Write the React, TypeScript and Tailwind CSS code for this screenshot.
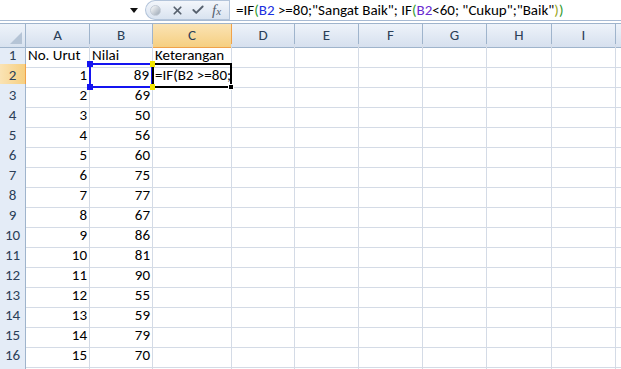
import { X, Check } from 'lucide-react';

const COLS = ['A', 'B', 'C', 'D', 'E', 'F', 'G', 'H', 'I', ''];
const NILAI = [89, 69, 50, 56, 60, 75, 77, 67, 86, 81, 90, 55, 59, 79, 70];
const GRID = 'grid grid-cols-[26px_64px_63px_79px_63px_64px_64px_64px_65px_64px_64px]';

const FONT = { fontFamily: '"Carlito", "Liberation Sans", Arial, sans-serif' };

function FormulaBar() {
  return (
    <div className="flex h-[21px] bg-white border-b border-[#a7bad3]">
      <div className="w-[145px] flex items-center justify-end pr-[7px]">
        <svg width="8" height="5" viewBox="0 0 8 5"><path d="M0 0h8L4 5z" fill="#111" /></svg>
      </div>
      <div className="w-[84px] h-[20px] rounded-l-full border border-r-0 border-[#b3c4da] bg-gradient-to-b from-[#f3f6fb] to-[#d9e3f0] flex items-center">
        <div className="ml-[4px] w-[11px] h-[11px] rounded-full bg-gradient-to-br from-[#ffffff] to-[#9aa6b4] border border-[#c3cbd6]" />
        <X className="ml-[10px] w-[13px] h-[13px] text-[#56606d]" strokeWidth={3.2} />
        <Check className="ml-[7px] w-[14px] h-[14px] text-[#56606d]" strokeWidth={3.2} />
        <span className="ml-[7px] text-[15px] italic text-[#55606e] leading-none" style={{ fontFamily: '"Liberation Serif", serif' }}>
          f<span className="text-[11px]">x</span>
        </span>
      </div>
      <div className="flex-1 flex items-center pl-[6px] text-[15px] text-black whitespace-nowrap overflow-hidden border-l border-[#b3c4da]" style={FONT}>
        =IF<span className="text-[#2f9a2f]">(</span><span className="text-[#1a2fe0]">B2</span>&nbsp;&gt;=80;"Sangat Baik"; IF
        <span className="text-[#2f9a2f]">(</span><span className="text-[#6a2bd0]">B2</span>&lt;60; "Cukup";"Baik"
        <span className="text-[#9aa61c]">)</span><span className="text-[#2f9a2f]">)</span>
      </div>
    </div>
  );
}

function HeaderRow() {
  return (
    <div className={`${GRID} h-[20px]`}>
      <div className="relative bg-gradient-to-b from-[#eef3fa] to-[#d8e2ef] border-r border-b border-[#9fb4cc]">
        <div className="absolute right-[3px] bottom-[3px] w-0 h-0 border-l-[12px] border-l-transparent border-b-[12px] border-b-[#b5c4d6]" />
      </div>
      {COLS.map((c, i) =>
        c === 'C' ? (
          <div key={i} className="flex items-center justify-center bg-gradient-to-b from-[#fae3b4] to-[#f6cf80] border-r border-b border-[#f0a24a] text-[15px] text-[#2c3f58]">
            {c}
          </div>
        ) : (
          <div key={i} className="flex items-center justify-center bg-gradient-to-b from-[#eef3fa] to-[#d6e0ee] border-r border-b border-[#9fb4cc] text-[15px] text-[#2c3f58]">
            {c}
          </div>
        )
      )}
    </div>
  );
}

function RowHead({ n }: { n?: number }) {
  return n === 2 ? (
    <div className="flex items-center justify-center bg-gradient-to-r from-[#fae3b4] to-[#f6cf80] border-r border-b border-[#f0a24a] text-[15px] text-[#2c3f58]">{n}</div>
  ) : (
    <div className="flex items-center justify-center bg-[#e4ecf7] border-r border-b border-[#9fb4cc] text-[15px] text-[#2c3f58]">{n}</div>
  );
}

function Cell({ children, right }: { children?: React.ReactNode; right?: boolean }) {
  return (
    <div className={`flex items-center px-[2px] border-r border-b border-[#d4dbe6] text-[15px] text-black whitespace-nowrap ${right ? 'justify-end' : ''}`}>
      {children}
    </div>
  );
}

function Blanks({ count }: { count: number }) {
  return <>{Array.from({ length: count }).map((_, i) => <Cell key={i} />)}</>;
}

export default function App() {
  return (
    <div className="w-[621px] h-[369px] overflow-hidden bg-white" style={FONT}>
      <FormulaBar />
      <div className="h-[3px] bg-white border-b border-[#9fb4cc]" />
      <HeaderRow />

      <div className={`${GRID} h-[20px]`}>
        <RowHead n={1} />
        <Cell>No. Urut</Cell>
        <Cell>Nilai</Cell>
        <Cell>Keterangan</Cell>
        <Blanks count={7} />
      </div>

      {/* row 2: B2 referenced, C2 active */}
      <div className={`${GRID} h-[20px]`}>
        <RowHead n={2} />
        <Cell right>1</Cell>
        <div className="relative flex items-center justify-end px-[3px] border-r border-b border-[#d4dbe6] text-[15px]">
          89
          <div className="absolute z-10 -left-[1px] -top-[1px] -right-[1px] -bottom-[1px] border-2 border-[#1414f0]" />
          <div className="absolute z-20 -left-[3px] -top-[3px] w-[6px] h-[6px] bg-[#1414f0]" />
          <div className="absolute z-20 -left-[3px] -bottom-[3px] w-[6px] h-[6px] bg-[#1414f0]" />
          <div className="absolute z-30 -right-[3px] -top-[3px] w-[5px] h-[6px] bg-[#f2e600]" />
          <div className="absolute z-30 -right-[3px] -bottom-[3px] w-[5px] h-[6px] bg-[#f2e600]" />
        </div>
        <div className="relative border-r border-b border-[#d4dbe6] text-[15px] whitespace-nowrap">
          <div className="absolute inset-0 right-[-1px] flex items-center pl-[2px] overflow-hidden">=IF(B2 &gt;=80;"</div>
          <div className="absolute z-20 -left-[1px] -top-[1px] -right-[1px] -bottom-[1px] border-2 border-black" />
          <div className="absolute z-30 -right-[3px] -bottom-[3px] w-[6px] h-[6px] bg-black border border-white" />
        </div>
        <Blanks count={7} />
      </div>

      {NILAI.slice(1).map((v, i) => (
        <div key={i} className={`${GRID} h-[20px]`}>
          <RowHead n={i + 3} />
          <Cell right>{i + 2}</Cell>
          <Cell right>{v}</Cell>
          <Blanks count={8} />
        </div>
      ))}

      <div className={`${GRID} h-[20px]`}>
        <RowHead />
        <Blanks count={10} />
      </div>
    </div>
  );
}
